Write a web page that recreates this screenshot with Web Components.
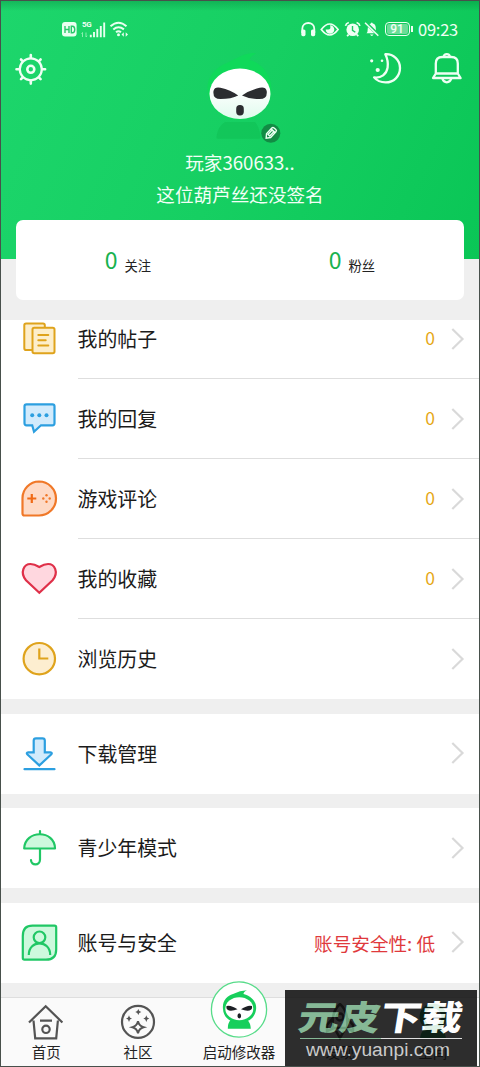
<!DOCTYPE html>
<html lang="zh-CN">
<head>
<meta charset="utf-8">
<title>空间</title>
<style>
html,body{margin:0;padding:0}
body{font-family:"Noto Sans CJK SC","Noto Sans",sans-serif;background:#efefef;color:#1b1b1b}
</style>
</head>
<body>
<profile-page></profile-page>
<script>
const ICONS = {
  hd: ['62 22 15 15', `<rect x="62" y="22" width="14.6" height="14.5" rx="3" fill="#e9fff0"/><path d="M65 26v7M65 29.5h4M69 26v7M71.3 26.2h1.2c3 0 3 6.6 0 6.6h-1.2z" fill="none" stroke="#28c86a" stroke-width="1.4"/>`],
  bars: ['81 20 26 17', `<path d="M82.5 31.5v4.5m0-4.5l-1 1.2M86 31.5v4.5m0 0l1.2-1.2" stroke="#8aeeb0" stroke-width="1" fill="none"/><path d="M90.8 33.8v2.4M94 31v5.2M97.3 28v8.2M100.8 25v11.2M104.2 21.5v14.7" stroke="#e9fff0" stroke-width="1.9"/>`],
  wifi: ['109 20 20 18', `<g fill="none" stroke="#e9fff0" stroke-width="2"><path d="M110.5 26.2q8-7 16 0M113.3 29.4q5.2-4.4 10.6 0M116 32.3q2.5-2 5 0"/></g><circle cx="118.5" cy="34.7" r="1.5" fill="#e9fff0"/><path d="M121.5 34.5l2.3-2.2v4.4zM128 34.5l-2.3-2.2v4.4z" fill="#e9fff0"/>`],
  phones: ['300 21 17 17', `<path d="M302.3 33v-4c0-8 12-8 12 0v4" fill="none" stroke="#effff4" stroke-width="1.8"/><rect x="301.3" y="29.5" width="4.2" height="6.7" rx="1.6" fill="#effff4"/><rect x="311" y="29.5" width="4.2" height="6.7" rx="1.6" fill="#effff4"/>`],
  eye: ['320 21 20 17', `<path d="M321.3 29.5q8.4-11 16.8 0q-8.4 11-16.8 0z" fill="none" stroke="#effff4" stroke-width="1.7"/><path d="M330 25.2a4.3 4.3 0 1 1-4.3 4.3h2.5c2 0 2.800-1.500 1.800-4.300z" fill="#effff4"/>`],
  alarm: ['343 21 17 17', `<circle cx="351.700" cy="29.800" r="6.300" fill="#effff4"/><path d="M344.500 25.800q.5-2.500 3.300-3.300M358.900 25.800q-.5-2.500-3.300-3.300M347.600 34.600l-1.500 1.600M355.800 34.600l1.500 1.600" stroke="#effff4" stroke-width="1.700" fill="none"/><path d="M351.500 26v4.300l2.800 2" stroke="#1bcb64" stroke-width="1.400" fill="none"/>`],
  mute: ['364 21 17 17', `<path d="M366.500 33.300q1.300-1 1.300-5q0-4.300 3-4.800q1-2.200 2 0q3 .5 3 4.800q0 4 1.600 5zM370 34.600h3.600q-1.800 2.600-3.600 0z" fill="#effff4"/><path d="M366 22.800l13 12.800" stroke="#1bcb64" stroke-width="3.200"/><path d="M365 22.800l13.300 13" stroke="#effff4" stroke-width="1.500"/>`],
  gear: ['14 52 34 34', `<g fill="none" stroke="#effff4" stroke-linecap="round"><circle cx="30.800" cy="68.300" r="11" stroke-width="2.200"/><circle cx="30.800" cy="68.300" r="3.500" stroke-width="2.600"/><path stroke-width="2.600" d="M30.800 54v3M30.800 79.600v3M16.500 68.300h3M42.100 68.300h3M21 58.500l1.800 1.800M38.800 76.300l1.800 1.800M21 78.100l1.800-1.800M38.800 60.300l1.800-1.800"/></g>`],
  moon: ['368 51 36 34', `<path d="M385.300 54.200c8-.5 14.700 5.600 14.700 13.800c0 8.300-6.300 14.400-14.300 14.400c-4.800 0-8.800-1.500-11.600-5c7 1 12.500-3.300 13.500-9.800c.7-5-.3-9.500-2.300-13.400z" fill="none" stroke="#effff4" stroke-width="2.300" stroke-linejoin="round"/><g fill="#effff4"><circle cx="371.700" cy="60.800" r="1.600"/><circle cx="382" cy="60.700" r="1.300"/><circle cx="377.700" cy="70" r="2.100"/></g>`],
  bell: ['430 51 34 34', `<g fill="none" stroke="#effff4" stroke-width="2.300" stroke-linejoin="round"><path d="M435.800 73.500V63.500q0-6.500 6.500-6.500h9q6.500 0 6.500 6.500v10l2.800 4.500h-27.600zM435.800 73.500h22"/><path d="M443.800 56.500q.500-2.300 3-2.300t3 2.300M442.300 78.500q1.200 3.800 4.500 3.800t4.500-3.800"/></g>`],
  pencil: ['261 123 20 20', `<circle cx="270.800" cy="133.200" r="9.500" fill="#128b44"/><g transform="rotate(-47 270.800 133.200)" fill="none" stroke="#eafff1" stroke-width="1.400"><path d="M264 133.200l3.500-2.800h7.800q1.600 0 1.600 1.600v2.400q0 1.600-1.600 1.600h-7.800z"/><path d="M268 132h6v2.400h-6zM274.200 130.400v5.600"/></g>`],
  avatar: ['200 48 80 96', `<path d="M225 122h30q4 4 5.500 14.800q.3 2-2 2H218.500q-2.300 0-2-2Q218 126 225 122z" fill="#0dbd51" opacity=".5"/><path d="M208 94c-3-15 6-26 19-31c7-3 12-7 20-9q7-1.800 9-.2q-5 1.400-6.500 6.200c15 4 24 19 21.500 34c-2 14-14 26-31 26s-29-10-32-26z" fill="#0edb58" opacity=".8"/><ellipse cx="240" cy="93.800" rx="30.500" ry="25.200" fill="url(#f)"/><path d="M213.500 91q1-4.500 7-3.200q10 2.200 17.700 7.700q-7 3.600-17.700 3.600q-8 0-7-8.100zM266.700 91q-1-4.500-7-3.200q-10 2.200-17.700 7.700q7 3.600 17.700 3.600q8 0 7-8.100z" fill="#2b2d30"/><rect x="236.200" y="105" width="7.600" height="10.500" rx="3.700" fill="#2b2d30"/><defs><linearGradient id="f" x2="0" y2="1"><stop offset=".4" stop-color="#fff"/><stop offset="1" stop-color="#dffbed"/></linearGradient></defs>`],
  posts: ['19 319 40 40', `<g fill="#fdeecb" stroke="#dfa31c" stroke-width="2" stroke-linejoin="round"><rect x="24.300" y="323.500" width="20.500" height="26.500" rx="1.800"/><rect x="32.500" y="327.700" width="22" height="25.600" rx="1.800"/><path d="M38.300 335h10M38.300 340.300h7.400M38.300 345.600h10" stroke-linecap="round"/></g>`],
  reply: ['19 399 40 40', `<path d="M26.500 404.300h26q2 0 2 2v17q0 2-2 2H41l-7 6.500l-1.800-6.500h-5.700q-2 0-2-2v-17q0-2 2-2z" fill="#d2ebfc" stroke="#2c9fe0" stroke-width="2.200"/><g fill="#2c9fe0"><circle cx="32.200" cy="415.300" r="2"/><circle cx="39.300" cy="415.300" r="2"/><circle cx="46.500" cy="415.300" r="2"/></g>`],
  game: ['19 479 40 40', `<path d="M39 481.500a17 17 0 0 1 0 34H24.500q-2 0-2-2V498.300A16.700 16.700 0 0 1 39 481.500z" fill="#fedac6" stroke="#f07828" stroke-width="2.200"/><path d="M31.800 494v9M27.300 498.500h9" stroke="#f06a16" stroke-width="2.200"/><g fill="#f07828"><circle cx="46.500" cy="495.300" r="1.200"/><circle cx="46.500" cy="501.700" r="1.200"/><circle cx="43.300" cy="498.500" r="1.200"/><circle cx="49.700" cy="498.500" r="1.200"/></g>`],
  heart: ['19 559 40 40', `<path d="M39.300 592.800L26 580.300C19.500 572 24 564 30.500 564c3 0 5 .700 8.800 3c3.800-2.300 5.800-3 8.800-3c6.500 0 11 8 4.500 16.300z" fill="#ffd7df" stroke="#df3049" stroke-width="2.200"/>`],
  clock: ['19 639 40 40', `<circle cx="39.300" cy="658.700" r="15.700" fill="#fdeed0" stroke="#dfa31c" stroke-width="2.200"/><path d="M39.300 648.500v10h9" fill="none" stroke="#dfa31c" stroke-width="2.200"/>`],
  download: ['19 733.500 40 40', `<path d="M36 737.800h6.500q2.300 0 2.300 2.300v11.700h5.500q2.500.400.800 2.300l-11.800 10.800l-11.800-10.800q-1.700-1.900.8-2.300h5.400v-11.700q0-2.300 2.300-2.300z" fill="#d2ebfc" stroke="#2c9fe0" stroke-width="2.200"/><path d="M24.500 768.700h30" stroke="#2c9fe0" stroke-width="2.200" stroke-linecap="round"/>`],
  umbrella: ['19 828 40 40', `<g stroke="#20c765" stroke-width="2.200" stroke-linecap="round" stroke-linejoin="round"><path d="M40 831v3" fill="none"/><path d="M24.200 848.500c.5-19 30.800-19 30.800 0z" fill="#cdf9dd"/><path d="M40 849v10.500c0 6.500-9 6.500-9 .5" fill="none"/></g>`],
  account: ['19 923 40 40', `<path d="M32.500 925.700h22q1.700 0 1.700 1.700v22q0 10.300-10.200 10.300H24.500q-1.700 0-1.700-1.700v-22q0-10.300 9.700-10.300z" fill="#cdf9dd" stroke="#20c765" stroke-width="2.200"/><g fill="none" stroke="#20c765" stroke-width="2.200"><circle cx="39.500" cy="937.300" r="5.800"/><path d="M28.800 955c0-15.500 21.400-15.500 21.400 0"/></g>`],
  chevron: ['450 327 16 24', `<path d="M452.300 329l10.200 10l-10.200 10" fill="none" stroke="#d9d9d9" stroke-width="2.200"/>`],
  home: ['27 1003 38 38', `<g fill="none" stroke="#545454" stroke-width="2.200"><path d="M33.500 1020.500l1.700 17.800h21l1.700-17.800M29 1022.500l16.700-16.300l16.700 16.300M40 1020.700h12"/><circle cx="46" cy="1029.300" r="3.700"/></g>`],
  community: ['119 1003 38 38', `<circle cx="138" cy="1021.900" r="16" fill="none" stroke="#545454" stroke-width="2.200"/><g fill="#545454"><path d="M138.300 1009q.5 2.500 3 3q-2.500.5-3 3q-.5-2.500-3-3q2.500-.5 3-3zM129 1015.300q.5 2.800 3 3.300q-2.500.5-3 3.300q-.5-2.800-3-3.300q2.500-.5 3-3.300zM146.300 1015.300q.5 2.800 3 3.300q-2.500.5-3 3.300q-.5-2.800-3-3.300q2.500-.5 3-3.300z"/></g><path d="M138 1021.300q1.200 4.800 5.500 6q-4.300 1.200-5.500 6q-1.200-4.800-5.500-6q4.300-1.200 5.500-6z" fill="none" stroke="#545454" stroke-width="2"/>`],
  launch: ['210 980 58 58', `<circle cx="239" cy="1009.500" r="27.600" fill="#fff" stroke="#58dc8a" stroke-width="1.300"/><path d="M230.500 1020h17q3 3 3.300 8.700h-23q0-5.700 2.700-8.700z" fill="#17cf5c"/><path d="M223 1009c-1-8 4-13 10-15q7-3.500 14-3.800q-3.500 1.500-3.500 3.800c8 2 13.300 8 12.600 15c-.8 8.500-7 13.500-16.600 13.500s-16-5-16.500-13.500z" fill="#17cf5c"/><ellipse cx="239.300" cy="1008.700" rx="14" ry="11.500" fill="#fff"/><path d="M226.500 1006q4-1.500 11 3.200q-4.500 1.900-8.500 1.300q-3.200-1-2.500-4.500zM252 1006q-4-1.500-11 3.200q4.500 1.900 8.500 1.300q3.200-1 2.500-4.500z" fill="#1c2025"/><ellipse cx="239.300" cy="1015.800" rx="1.800" ry="2.600" fill="#1c2025"/>`],
  discover: ['321 1003 38 38', `<g fill="none" stroke="#303030" stroke-width="2.500"><path d="M340 1004q9 8 7 24h-14q-2-16 7-24zM333 1018l-6 7v6l7-3M347 1018l6 7v6l-7-3M336 1031l4 7l4-7"/><circle cx="340" cy="1017" r="3.500"/></g>`],
  space: ['414 1003 38 38', `<circle cx="433" cy="1017" r="11" fill="none" stroke="#079747" stroke-width="5"/><path d="M420 1038q2-12 13-12t13 12z" fill="#079747"/>`]
};

class UiIcon extends HTMLElement {
  connectedCallback() {
    const [box, art] = ICONS[this.getAttribute('name')];
    const [, , w, h] = box.split(' ');
    this.attachShadow({mode: 'open'}).innerHTML =
      `<style>:host{display:block;flex:none;width:${w}px;height:${h}px}svg{display:block}</style><svg width="${w}" height="${h}" viewBox="${box}">${art}</svg>`;
  }
}

const define = (name, html) => {
  const t = document.createElement('template');
  t.innerHTML = html;
  customElements.define(name, class extends HTMLElement {
    constructor() {
      super();
      this.attachShadow({mode: 'open'}).append(t.content.cloneNode(true));
    }
  });
};
customElements.define('ui-icon', UiIcon);

define('status-bar', `<style>
:host{display:flex;align-items:center;height:18px;padding:19px 21px 1px 61px;color:#effff4}
.sig{display:grid;margin-left:4px}.sig>*{grid-area:1/1}
.sig span{font:700 8px/8px Roboto,sans-serif;padding-left:1px;letter-spacing:-.3px}
.r{display:flex;align-items:center;margin-left:auto;gap:3.500px}
.bat{display:flex;align-items:center}
.cell{box-sizing:border-box;width:25px;height:14.500px;border:1.500px solid #effff4;border-radius:4px;background:#6bdc98;background-clip:content-box;padding:1px;font:500 12px/10px Roboto,sans-serif;text-align:center}
.tip{width:2px;height:6px;background:#effff4;margin-left:1px}
time{font-size:16.500px;line-height:18px;margin-left:2px;letter-spacing:-.25px}
</style><ui-icon name="hd"></ui-icon><div class="sig"><ui-icon name="bars"></ui-icon><span>5G</span></div><ui-icon name="wifi" style="margin-left:2px"></ui-icon>
<div class="r"><ui-icon name="phones"></ui-icon><ui-icon name="eye"></ui-icon><ui-icon name="alarm"></ui-icon><ui-icon name="mute"></ui-icon><div class="bat"><div class="cell">91</div><div class="tip"></div></div><time>09:23</time></div>`);

define('profile-header', `<style>
:host{display:block;height:259px;background:linear-gradient(180deg,rgba(0,90,40,.25),transparent 10px),linear-gradient(115deg,#1dd66c 0%,#16cf62 50%,#0ac656 100%);color:#f2fff6}
.top{display:grid;grid-template-columns:1fr 80px 1fr;align-items:start;height:107px}
.left{padding:14px 0 0 13px}.right{display:flex;gap:26px;justify-content:flex-end;padding:12px 15px 0 0}
.avatar{position:relative;margin-top:9px}.edit{position:absolute;left:61px;top:75px}
</style><status-bar></status-bar><div class="top"><div class="left"><ui-icon name="gear"></ui-icon></div><div class="avatar"><ui-icon name="avatar"></ui-icon><ui-icon class="edit" name="pencil"></ui-icon></div><div class="right"><ui-icon name="moon"></ui-icon><ui-icon name="bell"></ui-icon></div></div>
<slot></slot>`);

define('stat-card', `<style>:host{display:grid;grid-template-columns:1fr 1fr;margin:-39px 15px 0;height:80px;background:#fff;border-radius:7px;position:relative}</style><slot></slot>`);
define('stat-item', `<style>:host{display:flex;align-items:baseline;justify-content:center;gap:7px;padding-top:19px;font-size:13.300px;line-height:40px;color:#222}
b{font-weight:400;font-size:23px;line-height:40px;color:#18b24e}
span{padding-top:1px;transform:translateY(1.500px)}</style><b><slot name="n"></slot></b><span><slot></slot></span>`);
define('menu-group', `<style>:host{display:block;background:#fff}</style><slot></slot>`);
define('menu-row', `<style>:host{display:flex;align-items:center;height:80px;padding-left:18px}
.body{flex:1;display:flex;align-items:center;justify-content:space-between;box-sizing:border-box;height:80px;margin-left:18.500px;padding-right:13px;border-bottom:1px solid var(--line,#dedede);font-size:19.900px}
.end{display:flex;align-items:center;gap:15px;font-size:17.500px;color:#e6a817}
::slotted([slot=count]){padding-bottom:1.500px}
::slotted([slot=warn]){color:#e0393c;font-size:18.600px}
</style><slot name="icon"></slot><div class="body"><span><slot></slot></span><div class="end"><slot name="count"></slot><slot name="warn"></slot><ui-icon name="chevron"></ui-icon></div></div>`);
define('nav-item', `<style>:host{display:flex;flex-direction:column;align-items:center;justify-content:flex-end;font-size:14.500px;line-height:22px;white-space:nowrap;color:#222}
::slotted([name=launch]){margin-bottom:3px}</style><slot name="icon"></slot><span><slot></slot></span>`);
define('tab-bar', `<style>:host{display:grid;grid-template-columns:90.500px 93px 109px 93px 92.500px;grid-template-rows:65px;box-sizing:border-box;height:69px;background:#fafafa;border-top:1px solid #dedede;padding-bottom:3px;align-items:end}</style><slot></slot>`);
define('site-mark', `<style>
:host{position:absolute;left:284px;top:989px;width:192px;height:76px;background:#0f0f0f;opacity:.87;overflow:hidden;display:flex;flex-direction:column;align-items:center}
.name{font-weight:900;font-size:41px;line-height:34px;height:34px;margin-top:10px;color:#fff;transform:translateY(-1.500px) skewX(-9deg) scaleY(.83);white-space:nowrap}
i{font-style:normal;color:#75af88}
hr{width:162px;height:1px;border:0;margin:4px 0 0;background:linear-gradient(90deg,#75af88 50%,#ddd 50%)}
.url{font:19.200px/22px "Liberation Sans",Arial,sans-serif;color:#c4c4c4;padding-right:6px}
</style><div class="name"><i>元皮</i>下载</div><hr><div class="url">www.yuanpi.com</div>`);
define('profile-page', `<style>
:host{display:block;position:relative;box-sizing:border-box;width:480px;height:1067px;overflow:hidden;border:1px solid #48504b;background:#efefef}
.view{height:677px;margin-top:20px;overflow:hidden}
.list{display:flex;flex-direction:column;gap:14.670px;margin-top:-21px}
p{margin:0;text-align:center;font-size:18.600px;line-height:32px}
profile-header{height:258px}
.last{--line:transparent}
</style>
<profile-header><p>玩家360633..</p><p>这位葫芦丝还没签名</p></profile-header>
<stat-card><stat-item><span slot="n">0</span>关注</stat-item><stat-item><span slot="n">0</span>粉丝</stat-item></stat-card>
<div class="view"><div class="list">
<menu-group>
<menu-row><ui-icon slot="icon" name="posts"></ui-icon>我的帖子<span slot="count">0</span></menu-row>
<menu-row><ui-icon slot="icon" name="reply"></ui-icon>我的回复<span slot="count">0</span></menu-row>
<menu-row><ui-icon slot="icon" name="game"></ui-icon>游戏评论<span slot="count">0</span></menu-row>
<menu-row><ui-icon slot="icon" name="heart"></ui-icon>我的收藏<span slot="count">0</span></menu-row>
<menu-row class="last"><ui-icon slot="icon" name="clock"></ui-icon>浏览历史</menu-row>
</menu-group>
<menu-group class="last"><menu-row><ui-icon slot="icon" name="download"></ui-icon>下载管理</menu-row></menu-group>
<menu-group class="last"><menu-row><ui-icon slot="icon" name="umbrella"></ui-icon>青少年模式</menu-row></menu-group>
<menu-group class="last"><menu-row><ui-icon slot="icon" name="account"></ui-icon>账号与安全<span slot="warn">账号安全性: 低</span></menu-row></menu-group>
</div></div>
<tab-bar>
<nav-item><ui-icon slot="icon" name="home"></ui-icon>首页</nav-item>
<nav-item><ui-icon slot="icon" name="community"></ui-icon>社区</nav-item>
<nav-item><ui-icon slot="icon" name="launch"></ui-icon>启动修改器</nav-item>
<nav-item><ui-icon slot="icon" name="discover"></ui-icon>发现</nav-item>
<nav-item><ui-icon slot="icon" name="space"></ui-icon>空间</nav-item>
</tab-bar>
<site-mark></site-mark>`);
</script>
</body>
</html>
